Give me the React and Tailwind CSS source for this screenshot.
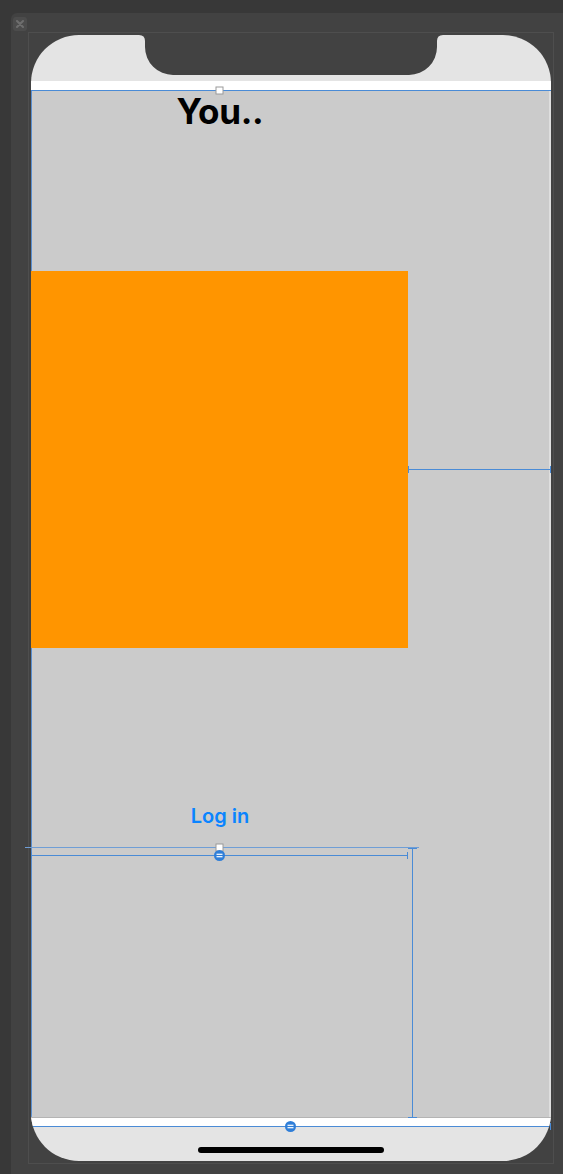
import React from 'react'

const LINE = '#4a8bd6'

function Handle({ x, y }) {
  return <rect x={x - 3.5} y={y - 3.5} width="7" height="7" fill="#fff" stroke="#9a9a9a" strokeWidth="1" />
}

function EqualDot({ x, y }) {
  return (
    <g>
      <circle cx={x} cy={y} r="5.5" fill="#2f7ed8" />
      <rect x={x - 3} y={y - 1.8} width="6" height="1.2" fill="#fff" />
      <rect x={x - 3} y={y + 0.6} width="6" height="1.2" fill="#fff" />
    </g>
  )
}

// constraint annotations drawn by Interface Builder on top of the scene
function Constraints() {
  return (
    <svg className="absolute inset-0 pointer-events-none" width="563" height="1174" viewBox="0 0 563 1174">
      <g stroke={LINE} strokeWidth="1" shapeRendering="crispEdges">
        {/* trailing space from orange view */}
        <path d="M408 469.5 H551 M408.5 466 V473 M550.5 466 V473" />
        {/* selected view top edge */}
        <path d="M25 847.5 H419" stroke="#6f9ed6" />
        {/* equal width */}
        <path d="M31 855.5 H408 M31.5 852 V859 M407.5 852 V859" />
        {/* bottom space */}
        <path d="M412.5 848 V1117 M408 848.5 H417 M408 1117.5 H417" />
        <path d="M550.5 1123 V1130" />
      </g>
      <Handle x={219.5} y={90.5} />
      <Handle x={219.5} y={847.5} />
      <EqualDot x={219.5} y={855.5} />
      <EqualDot x={290.5} y={1126.5} />
    </svg>
  )
}

export default function App() {
  return (
    <div className="relative w-[563px] h-[1174px] overflow-hidden bg-[#383838] pl-[11px] pt-[13px] flex" style={{ fontFamily: 'Inter, "Liberation Sans", sans-serif' }}>
      <div className="flex-1 bg-[#424242] rounded-tl-[6px] relative pl-[17px] pt-[19px]">
        {/* close box */}
        <div className="absolute left-[2px] top-[4px] w-[14px] h-[14px] rounded-[3px] bg-[#4c4c4c] flex items-center justify-center">
          <svg width="8" height="8" viewBox="0 0 8 8">
            <path d="M1 1 L7 7 M7 1 L1 7" stroke="#6e6e6e" strokeWidth="2" strokeLinecap="round" />
          </svg>
        </div>

        {/* scene frame */}
        <div className="w-[526px] h-[1132px] border border-[#4e4e4e] pl-[2px] pt-[2px]">
          {/* device */}
          <div className="w-[520px] h-[1126px] rounded-[48px] overflow-hidden bg-[#e4e4e4] flex flex-col">
            <div className="h-[46px] shrink-0 flex justify-center">
              <svg width="304" height="40" viewBox="0 0 304 40">
                <path d="M0 0 H304 Q298 0 298 6 V12 A28 28 0 0 1 270 40 H34 A28 28 0 0 1 6 12 V6 Q6 0 0 0 Z" fill="#424242" />
              </svg>
            </div>
            <div className="h-[9px] bg-white shrink-0" />
            <div className="h-px shrink-0 bg-[#4a8bd6]" />

            {/* view controller content */}
            <div className="flex-1 bg-[#cbcbcb] border-l border-l-[#5a8fd0] border-r-2 border-r-[#dedede]">
              <div className="w-[376px] flex flex-col items-center">
                <div className="mt-[3px] text-[35px] leading-none font-bold text-black tracking-[-0.3px]">You..</div>
                <div className="mt-[142px] w-[377px] -ml-px h-[377px] bg-[#ff9500]" />
                <div className="mt-[158px] text-[20px] leading-none font-semibold text-[#0a84ff]">Log in</div>
              </div>
            </div>

            <div className="h-px bg-[#b4b4b4] shrink-0" />
            <div className="h-[8px] bg-white shrink-0" />
            <div className="h-px shrink-0 bg-[#4a8bd6]" />
            <div className="h-[34px] shrink-0 pt-[20px] flex justify-center">
              <div className="w-[186px] h-[6px] rounded-full bg-black" />
            </div>
          </div>
        </div>
      </div>

      <Constraints />
    </div>
  )
}
